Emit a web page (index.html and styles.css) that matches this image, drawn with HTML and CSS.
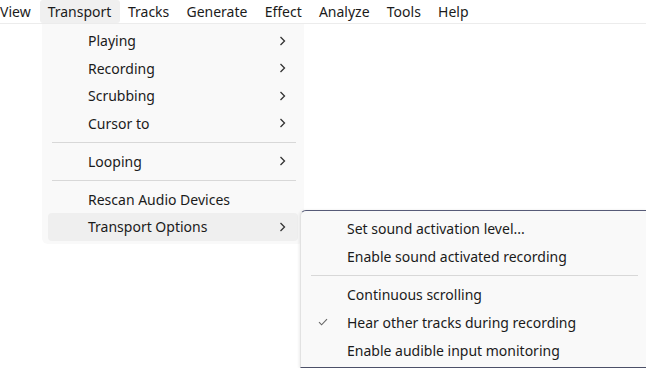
FILE: index.html
```html
<!DOCTYPE html>
<html>
<head>
<meta charset="utf-8">
<link rel="stylesheet" href="styles.css">
</head>
<body>
<div class="app">
  <nav class="menubar">
    <span class="mb-item first">View</span>
    <span class="mb-item active">Transport</span>
    <span class="mb-item">Tracks</span>
    <span class="mb-item">Generate</span>
    <span class="mb-item">Effect</span>
    <span class="mb-item">Analyze</span>
    <span class="mb-item">Tools</span>
    <span class="mb-item">Help</span>
  </nav>

  <div class="menu main-menu">
    <div class="item"><span class="label">Playing</span><svg class="chev" width="7" height="10" viewBox="0 0 7 10"><polyline points="1.5,1 5.5,5 1.5,9" fill="none" stroke="#333" stroke-width="1.3"/></svg></div>
    <div class="item"><span class="label">Recording</span><svg class="chev" width="7" height="10" viewBox="0 0 7 10"><polyline points="1.5,1 5.5,5 1.5,9" fill="none" stroke="#333" stroke-width="1.3"/></svg></div>
    <div class="item"><span class="label">Scrubbing</span><svg class="chev" width="7" height="10" viewBox="0 0 7 10"><polyline points="1.5,1 5.5,5 1.5,9" fill="none" stroke="#333" stroke-width="1.3"/></svg></div>
    <div class="item"><span class="label">Cursor to</span><svg class="chev" width="7" height="10" viewBox="0 0 7 10"><polyline points="1.5,1 5.5,5 1.5,9" fill="none" stroke="#333" stroke-width="1.3"/></svg></div>
    <div class="sep"></div>
    <div class="item"><span class="label">Looping</span><svg class="chev" width="7" height="10" viewBox="0 0 7 10"><polyline points="1.5,1 5.5,5 1.5,9" fill="none" stroke="#333" stroke-width="1.3"/></svg></div>
    <div class="sep"></div>
    <div class="item"><span class="label">Rescan Audio Devices</span></div>
    <div class="item hover"><span class="label">Transport Options</span><svg class="chev" width="7" height="10" viewBox="0 0 7 10"><polyline points="1.5,1 5.5,5 1.5,9" fill="none" stroke="#333" stroke-width="1.3"/></svg></div>
  </div>

  <div class="menu sub-menu">
    <div class="item"><span class="check"></span><span class="label">Set sound activation level...</span></div>
    <div class="item"><span class="check"></span><span class="label">Enable sound activated recording</span></div>
    <div class="sep"></div>
    <div class="item"><span class="check"></span><span class="label">Continuous scrolling</span></div>
    <div class="item"><span class="check"><svg width="10" height="8" viewBox="0 0 10 8"><polyline points="1,4.2 3.6,6.8 9,1.2" fill="none" stroke="#666" stroke-width="1.1"/></svg></span><span class="label">Hear other tracks during recording</span></div>
    <div class="item"><span class="check"></span><span class="label">Enable audible input monitoring</span></div>
  </div>
</div>
</body>
</html>
```

FILE: styles.css
```css
html, body {
  margin: 0;
  padding: 0;
  background: #ffffff;
  overflow: hidden;
}
.app {
  position: relative;
  width: 646px;
  height: 368px;
  font-family: "Noto Sans", "Segoe UI", sans-serif;
  font-size: 14px;
  color: #1b1b1b;
}
.menubar {
  display: flex;
  height: 23px;
  border-bottom: 1px solid #ececec;
  box-sizing: content-box;
  align-items: stretch;
}
.mb-item {
  display: flex;
  align-items: center;
  padding: 0 8.6px;
  line-height: 1;
}
.mb-item.first {
  padding-left: 0;
  padding-right: 9px;
}
.mb-item.active {
  background: #f0f0f0;
  border-radius: 3px;
  padding-left: 8px;
  padding-right: 9px;
  margin-right: -1px;
}
.menu {
  position: absolute;
  background: #f9f9f9;
  box-sizing: border-box;
}
.main-menu {
  left: 42px;
  top: 24px;
  width: 262px;
  padding: 3px 0 3px;
  border-radius: 0 0 6px 6px;
}
.item {
  display: flex;
  align-items: center;
  height: 27.5px;
  margin: 0 6px;
  padding-left: 40px;
  padding-right: 12px;
  border-radius: 4px;
}
.item .label {
  flex: 1;
  white-space: nowrap;
}
.item.hover {
  background: #efefef;
}
.chev {
  display: block;
  flex: none;
}
.sep {
  height: 1px;
  background: #d8d8d8;
  margin: 4.75px 9px 4.75px 10px;
}
.main-menu .sep {
  margin: 5px 8px 4.5px 10px;
}
.sub-menu {
  left: 300px;
  top: 210px;
  width: 347px;
  height: 158px;
  padding: 3px 0 0;
  border-top: 1.5px solid #575b78;
  border-left: 1px solid #e2e2e2;
  border-bottom: 1.5px solid #4c5068;
  border-radius: 6px 0 0 0;
  box-shadow: -1px 0 3px rgba(0, 0, 0, 0.08);
}
.sub-menu .item {
  height: 28px;
  padding-left: 0;
}
.sub-menu .sep {
  margin: 4.5px 9px 4.5px 10px;
}
.check {
  width: 40px;
  flex: none;
  display: flex;
  align-items: center;
  padding-left: 11px;
  box-sizing: border-box;
}
.check svg {
  display: block;
}
```
